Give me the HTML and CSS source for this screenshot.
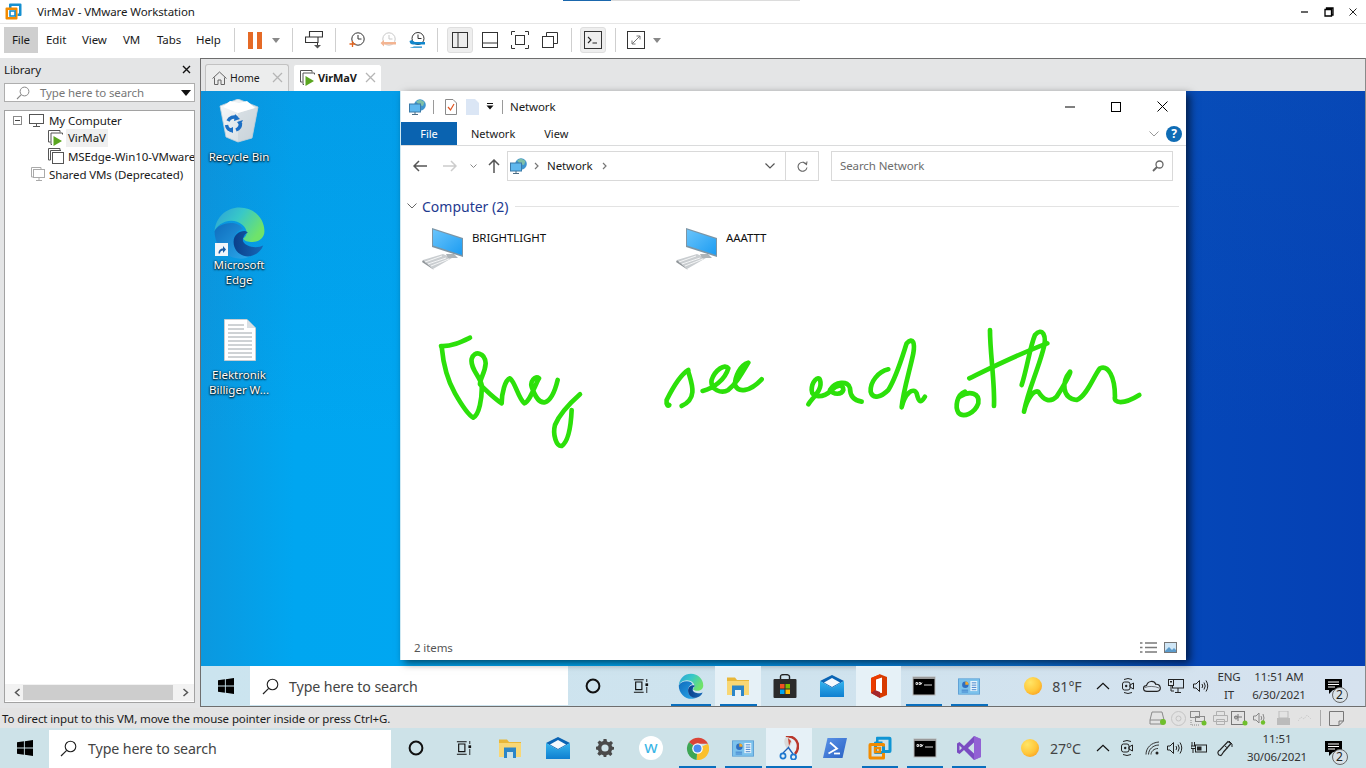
FILE: index.html
```html
<!DOCTYPE html>
<html lang="en">
<head>
<meta charset="utf-8">
<title>VirMaV - VMware Workstation</title>
<link rel="stylesheet" href="styles.css">
</head>
<body>
<svg class="defs" width="0" height="0" aria-hidden="true">
  <defs>
    <linearGradient id="gEdgeTop" x1="0" y1="0" x2="1" y2="0.5"><stop offset="0" stop-color="#2b9fd9"/><stop offset=".5" stop-color="#38c8c8"/><stop offset="1" stop-color="#6fe36a"/></linearGradient>
    <linearGradient id="gEdgeBody" x1="0" y1="0" x2="1" y2="1"><stop offset="0" stop-color="#0f6cbd"/><stop offset="1" stop-color="#2ba8ea"/></linearGradient>
    <linearGradient id="gEdgeDark" x1="0" y1="0" x2="1" y2="0"><stop offset="0" stop-color="#0b3f8a"/><stop offset="1" stop-color="#1668b8"/></linearGradient>
    <radialGradient id="gSun" cx=".35" cy=".3" r=".85"><stop offset="0" stop-color="#ffe566"/><stop offset=".6" stop-color="#ffc73a"/><stop offset="1" stop-color="#f99a1c"/></radialGradient>
    <linearGradient id="gScreen" x1="0" y1="0" x2="1" y2="1"><stop offset="0" stop-color="#69c4fb"/><stop offset="1" stop-color="#1c9cf2"/></linearGradient>
    <linearGradient id="gBin" x1="0" y1="0" x2="1" y2="1"><stop offset="0" stop-color="#f7fafb"/><stop offset="1" stop-color="#cfd9df"/></linearGradient>
    <linearGradient id="gMail" x1="0" y1="0" x2="0" y2="1"><stop offset="0" stop-color="#35b4ee"/><stop offset="1" stop-color="#0f7fd0"/></linearGradient>
    <linearGradient id="gPs" x1="0" y1="0" x2="1" y2="1"><stop offset="0" stop-color="#5b93e8"/><stop offset="1" stop-color="#2a62c4"/></linearGradient>

    <symbol id="i-win" viewBox="0 0 16 16"><path d="M0 2.3 6.9 1.3V7.6H0zM7.8 1.2 16 0V7.6H7.8zM0 8.4H6.9V14.7L0 13.7zM7.8 8.4H16V16L7.8 14.8z" fill="#000"/></symbol>
    <symbol id="i-search" viewBox="0 0 17 17"><circle cx="10.5" cy="6.5" r="5.3" fill="none" stroke="#222" stroke-width="1.1"/><path d="M6.7 10.3 1 16" stroke="#222" stroke-width="1.2"/></symbol>
    <symbol id="i-cortana" viewBox="0 0 16 16"><circle cx="8" cy="8" r="6.4" fill="none" stroke="#111" stroke-width="2"/></symbol>
    <symbol id="i-taskview" viewBox="0 0 18 16"><path d="M1 1H12M1 15H12M3 3.500H10V12H3z" fill="none" stroke="#111" stroke-width="1.3"/><rect x="14" y="5" width="3" height="3" fill="#111"/><path d="M15.500 0V3.500M15.500 9V16" stroke="#111" stroke-width="1"/></symbol>
    <symbol id="i-edge" viewBox="0 0 48 48">
      <path d="M3 23C4 11 13 3 24 3c12 0 21 9 21 20 0 6-5 9-10 9-4 0-7-1-8-3 2-1 3-3 3-5 0-5-6-10-13-10C10 14 4 19 3 23z" fill="url(#gEdgeTop)"/>
      <path d="M3 23c0 13 10 23 22 23 3 0 6-1 8-2-8 0-14-5-14-12 0-5 3-10 8-11-2-3-5-5-10-5-7 0-12 3-14 7z" fill="url(#gEdgeBody)"/>
      <path d="M19 32c0 7 6 13 14 12 5-1 9-4 11-9-2 1-6 2-10 1-5-1-8-4-7-7 1-3 2-4 4-5-2-3-12-1-12 8z" fill="url(#gEdgeDark)"/>
    </symbol>
    <symbol id="i-folder" viewBox="0 0 22 20"><path d="M0 1.500H8L10 4H22V6H0z" fill="#e8b739"/><path d="M0 5H22V19H15V14H7V19H0z" fill="#f8d775"/><path d="M5 9.500H17V20H14V14H8V20H5z" fill="#2c86c8"/></symbol>
    <symbol id="i-store" viewBox="0 0 24 24"><path d="M7.500 5V2.500C7.500 1 9 .5 12 .5S16.500 1 16.500 2.500V5" fill="none" stroke="#222" stroke-width="1.4"/><rect x="0.500" y="5" width="23" height="19" rx="1" fill="#2b2b2b"/><rect x="7" y="10" width="4.500" height="4.500" fill="#f25022"/><rect x="12.500" y="10" width="4.500" height="4.500" fill="#7fba00"/><rect x="7" y="15.500" width="4.500" height="4.500" fill="#00a4ef"/><rect x="12.500" y="15.500" width="4.500" height="4.500" fill="#ffb900"/></symbol>
    <symbol id="i-mail" viewBox="0 0 24 22"><path d="M0 6 12 0 24 6 12 13z" fill="#0a64b4"/><path d="M4 7.500 12 3 20 7.500 12 12z" fill="#f5f9fd"/><path d="M0 6 12 13 24 6V22H0z" fill="url(#gMail)"/></symbol>
    <symbol id="i-office" viewBox="0 0 18 24"><path d="M17 3 10 .3 1 4V19L10 24 17 21z" fill="#d83b01"/><path d="M6 5.500 12 3.500V19L4 18 6 16z" fill="#fff"/><path d="M1 4 10 .3V3.500L5 5.500V16L1 19z" fill="#eb3c00"/><path d="M1 19 5 16 10 18V24z" fill="#a4262c"/></symbol>
    <symbol id="i-cmd" viewBox="0 0 24 20"><rect x="1" y="1" width="22" height="18" fill="#000" stroke="#b8b8b8"/><rect x="1" y="1" width="22" height="2" fill="#999"/><path d="M4 6.500H5.500V8.500H4zM7 6.500H8.500V8.500H7zM10 6.500 9 8.500M12 9H20" stroke="#d5d5d5" stroke-width="1" fill="none"/></symbol>
    <symbol id="i-control" viewBox="0 0 24 18"><rect x="0.500" y="0.500" width="23" height="17" fill="#7cc2ec" stroke="#5c9fd4"/><circle cx="8" cy="7" r="3.500" fill="#2f6fc0"/><path d="M8 7V3.500A3.500 3.500 0 0 1 11.500 7z" fill="#f3a92c"/><path d="M4 13H11M4 15H11" stroke="#3b7bc8"/><rect x="13.500" y="3" width="7.500" height="11" fill="#e8f4fb"/><path d="M15 5H20M15 7.500H20M15 10H20M15 12.500H20" stroke="#3b7bc8"/></symbol>
    <symbol id="i-gear" viewBox="0 0 18 18"><path d="M7.500 0H10.500L11 2.500 13 3.300 15 1.900 17 4 15.500 6 16.300 7.800 18 8V10.500L16 11 15.200 13 16.400 15 14.400 17 12.400 15.600 10.500 16.300 10.300 18H7.700L7.300 16.200 5.500 15.500 3.400 16.800 1.300 14.800 2.700 12.800 2 11 0 10.500V7.700L2 7.300 2.800 5.300 1.500 3.400 3.500 1.400 5.500 2.700 7.300 2z" fill="#4a4a4a"/><circle cx="9" cy="9" r="3.600" fill="#cfe3e9"/></symbol>
    <symbol id="i-chrome" viewBox="0 0 24 24"><path d="M12 12 3 5.500A12 12 0 0 1 23 7H12z" fill="#db4437"/><path d="M12 12 23 7A12 12 0 0 1 11 24z" fill="#fbc02d"/><path d="M12 12 11 24A12 12 0 0 1 3 5.500z" fill="#3ea655"/><circle cx="12" cy="12" r="5.500" fill="#fff"/><circle cx="12" cy="12" r="4.200" fill="#4a8cf0"/></symbol>
    <symbol id="i-snip" viewBox="0 0 20 24"><path d="M7 1C13-1 19 4 19 10c0 3-1 6-3 8" fill="none" stroke="#b9382c" stroke-width="2.500"/><path d="M7 1C4 4 5 9 9 14l4-8C12 3 10 1 7 1z" fill="#d9d9d9"/><path d="M9 2 12 5 10 10z" fill="#c8432f"/><path d="M4 17 10 11M14 18 9 11" stroke="#1e60b8" stroke-width="1.300"/><circle cx="4" cy="20" r="2.600" fill="none" stroke="#1e78d0" stroke-width="1.700"/><circle cx="14.500" cy="21" r="2.600" fill="none" stroke="#1e78d0" stroke-width="1.700"/></symbol>
    <symbol id="i-ps" viewBox="0 0 24 20"><path d="M4.500 0H24L19.500 20H0z" fill="url(#gPs)"/><path d="M7 4.500 14 10.500 5.500 15.500" fill="none" stroke="#fff" stroke-width="1.800"/><path d="M11 15.500H17" stroke="#fff" stroke-width="1.800"/></symbol>
    <symbol id="i-vmware" viewBox="0 0 24 24"><path d="M9 0.800H21.500Q23.500.8 23.500 2.800V15Q23.500 17 21.500 17H16.500V14H20.500V3.800H10.500V7.500H8V1.800Q8 .8 9 .8z" fill="#0f95d4"/><path d="M8 5.500H14.500V8.500H9V12H6V6.500Q6 5.500 8 5.500zM9 13V15H14V8H17V16.500Q17 18 15.500 18H7.500Q6 18 6 16.500V13z" fill="#0f95d4"/><path d="M2.500 7H15.500Q17 7 17 8.500V10.500H14V10H3.500V20.500H14V17H17V22Q17 23.500 15.500 23.500H2.500Q.5 23.500.5 21.500V9Q.5 7 2.500 7z" fill="#f38b00"/><path d="M7 12H12V16H7z" fill="none" stroke="#f38b00" stroke-width="2.400"/></symbol>
    <symbol id="i-vs" viewBox="0 0 24 24"><path d="M17 0 24 3V21L17 24 7 14 2.500 18 0 16.500V7.500L2.500 6 7 10zM17 6.500 11 12 17 17.500zM2.500 9.500V14.500L5 12z" fill="#7a4cc2"/><path d="M17 0 24 3V21L17 24z" fill="#9d6bdc" fill-opacity=".7"/></symbol>
    <symbol id="i-sun" viewBox="0 0 18 18"><circle cx="9" cy="9" r="9" fill="url(#gSun)"/></symbol>
    <symbol id="i-chev" viewBox="0 0 14 8"><path d="M1 7 7 1.300 13 7" fill="none" stroke="#111" stroke-width="1.200"/></symbol>
    <symbol id="i-cam" viewBox="0 0 12 18"><path d="M2 2.500Q6 0.500 10 2.500M2 15.500Q6 17.500 10 15.500" fill="none" stroke="#222"/><rect x="0.500" y="5" width="7.500" height="8" rx="2" fill="none" stroke="#222"/><path d="M8 8 11.500 6V12L8 10z" fill="none" stroke="#222"/><circle cx="4.200" cy="9" r="1.200" fill="#222"/></symbol>
    <symbol id="i-cloud" viewBox="0 0 18 12"><path d="M4 11.300C-.5 11.300-.5 5.800 3.500 5.500 5 .5 11 .2 12.800 4.300 18 3.500 19 11.300 14 11.300z" fill="#dde7f0" stroke="#222" stroke-width="1.200"/><path d="M2 7.500C5 6 12 6 16 8" fill="none" stroke="#222" stroke-width=".6"/></symbol>
    <symbol id="i-netmon" viewBox="0 0 16 15"><rect x="4.500" y="0.500" width="11" height="8.500" fill="none" stroke="#222"/><rect x="0.500" y="0.500" width="5" height="6" fill="#dbe6ef" stroke="#222"/><path d="M3 6.500V12H6M10 9V13M7 13.500H13" fill="none" stroke="#222"/><rect x="2" y="2" width="2" height="1.500" fill="#222"/></symbol>
    <symbol id="i-speaker" viewBox="0 0 16 14"><path d="M.5 5H3L6.500 1.500V12.500L3 9H.5z" fill="none" stroke="#222"/><path d="M9 5Q10.500 7 9 9M11 3.500Q13.500 7 11 10.500M13 1.500Q16.500 7 13 12.500" fill="none" stroke="#222"/></symbol>
    <symbol id="i-wifi" viewBox="0 0 16 14"><path d="M1 13.500C1 7 6 1.500 14 1M3.500 13.500C3.500 8.500 8 4 14 4M6 13.500C6 10.500 9 7.500 13 7.500" fill="none" stroke="#333" stroke-width="1"/><circle cx="12" cy="12" r="1.500" fill="#222"/></symbol>
    <symbol id="i-battery" viewBox="0 0 16 12"><rect x="4.500" y="3" width="11" height="7" fill="none" stroke="#222"/><rect x="6" y="4.500" width="4.500" height="4" fill="#222"/><path d="M1 0V4M3.500 0V4M0 4H4.500V6.500H0zM2 6.500V11" stroke="#222" fill="none"/></symbol>
    <symbol id="i-pen" viewBox="0 0 16 17"><path d="M2 15C0 13 1 11 3 10L11 1.500 14 3.500 6.500 12C5 14 5 15 4 15.500z" fill="none" stroke="#222" stroke-width="1.200"/><path d="M8 6 10.500 8M12 1 15 4 15 7" fill="none" stroke="#222"/></symbol>
    <symbol id="i-note" viewBox="0 0 17 15"><path d="M0 0H17V11H8L4 15V11H0z" fill="#000"/><path d="M3 3H14M3 5.500H14M3 8H10" stroke="#fff" stroke-width="1"/></symbol>
    <symbol id="i-monitor" viewBox="0 0 45 44">
      <path d="M3 33 23 27 32 31 13 42z" fill="#c9cdd0"/><path d="M3 33 13 42 14 43 2 35z" fill="#8f9599"/>
      <path d="M5 35 22 29M8 37 26 31M11 39 29 32" stroke="#fff" stroke-width=".8"/>
      <path d="M26 27H34L38 31 28 31z" fill="#aeb4b8"/>
      <path d="M12 1 43 11V30L12 20z" fill="#7d95a5"/><path d="M13 2.500 42 12V28L13 18.500z" fill="url(#gScreen)"/>
    </symbol>
    <symbol id="i-net" viewBox="0 0 17 16">
      <circle cx="11" cy="6" r="5.800" fill="#3f95cf"/><path d="M7 2.500 11 .5 15.500 3 14 7 10 6z" fill="#7fbfa8"/>
      <rect x="0.500" y="5" width="11" height="8" fill="#5fb8ee" stroke="#3b7aa8"/><path d="M6 13V15.500M3 15.500H9" stroke="#4b6c84"/>
    </symbol>
  </defs>
</svg>

<div class="app">
  <header class="titlebar">
    <svg class="logo" width="17" height="17" viewBox="0 0 17 17"><path d="M5 .5H15.500Q16.500.5 16.500 1.500V12Q16.500 13 15.500 13H12.500V10.500H14V3H6.500V5H4V1.500Q4 .5 5 .5z" fill="#1590d0"/><path d="M1.500 4.500H11.500Q12.500 4.500 12.500 5.500V15.500Q12.500 16.500 11.500 16.500H1.500Q.5 16.500.5 15.500V5.500Q.5 4.500 1.500 4.500zM3 7V14H10V7z" fill="#f38b00"/><rect x="5" y="8" width="5" height="5" fill="none" stroke="#1590d0" stroke-width="1.600"/></svg>
    <span class="title-text">VirMaV - VMware Workstation</span>
    <span class="focus-mark"></span>
    <div class="win-ctrls">
      <svg width="10" height="10" viewBox="0 0 10 10"><path d="M1 5H8" stroke="#000" stroke-width="1.200"/></svg>
      <svg width="10" height="10" viewBox="0 0 10 10"><path d="M2.500 2.500V1H9V8H7.500M1 2.500H7.500V9H1z" fill="none" stroke="#000" stroke-width="1.300"/></svg>
      <svg width="10" height="10" viewBox="0 0 10 10"><path d="M1.500 1.500 8.500 8.500M8.500 1.500 1.500 8.500" stroke="#222"/></svg>
    </div>
  </header>

  <nav class="menubar">
    <div class="menus">
      <span class="menu is-open">File</span><span class="menu m-edit">Edit</span><span class="menu m-view">View</span><span class="menu m-vm">VM</span><span class="menu m-tabs">Tabs</span><span class="menu m-help">Help</span>
    </div>
    <div class="tools">
      <i class="sep"></i>
      <svg width="14" height="17" viewBox="0 0 14 17"><rect width="5" height="17" fill="#e56a26"/><rect x="9" width="5" height="17" fill="#e56a26"/></svg>
      <i class="caret"></i>
      <i class="sep"></i>
      <svg width="18" height="18" viewBox="0 0 18 18"><path d="M4.500 6V.5H17.500V6H13M.5 6H13V11.500H.5z" fill="none" stroke="#333" stroke-width="1.100"/><path d="M12.500 11.500V14" stroke="#333"/><path d="M12.500 17.500 9 14H16z" fill="#555"/></svg>
      <i class="sep"></i>
      <svg width="16" height="16" viewBox="0 0 16 16"><circle cx="9" cy="7" r="6.200" fill="none" stroke="#333" stroke-width="1"/><path d="M9 3V7H12.500" fill="none" stroke="#333"/><path d="M3.500 9V15M.5 12H6.500" stroke="#e2641e" stroke-width="1.300"/></svg>
      <svg width="17" height="16" viewBox="0 0 17 16"><circle cx="9" cy="7" r="6.200" fill="none" stroke="#c9c9c9"/><path d="M9 3V7H12.500" fill="none" stroke="#c9c9c9"/><path d="M.5 11 4 8V10H16V12.500H4V14.500z" fill="#f3b491"/></svg>
      <svg width="17" height="16" viewBox="0 0 17 16"><circle cx="9" cy="6.500" r="6" fill="none" stroke="#333"/><path d="M9 2.500V6.500H12.500" fill="none" stroke="#333"/><path d="M.5 9Q1 13 5 12.500H16V10H6Q4 9.500 3 8zM1 15Q3 15.500 5 14.500H13V15.800H2z" fill="#0f86cc"/></svg>
      <i class="sep"></i>
      <span class="toggle"><svg width="16" height="16" viewBox="0 0 16 16"><rect x="0.500" y="0.500" width="15" height="15" fill="none" stroke="#333"/><path d="M6 0V16" stroke="#333"/></svg></span>
      <svg width="16" height="16" viewBox="0 0 16 16"><rect x="0.500" y="0.500" width="15" height="15" fill="none" stroke="#333"/><path d="M0 11H16" stroke="#333"/></svg>
      <svg width="18" height="18" viewBox="0 0 18 18"><path d="M.5 4V.5H4M14 .5H17.500V4M17.500 14V17.500H14M4 17.500H.5V14" fill="none" stroke="#333"/><rect x="4.500" y="4.500" width="9" height="9" fill="none" stroke="#333"/></svg>
      <svg width="16" height="16" viewBox="0 0 16 16"><path d="M4.500 4.500V.5H15.500V11.500H11.500" fill="none" stroke="#333"/><rect x="0.500" y="4.500" width="11" height="11" fill="none" stroke="#333"/></svg>
      <i class="sep"></i>
      <span class="toggle t-console"><svg width="18" height="18" viewBox="0 0 18 18"><rect x="0.500" y="0.500" width="17" height="17" fill="none" stroke="#333"/><path d="M4 6 7 9 4 12" fill="none" stroke="#222" stroke-width="1.100"/><path d="M8.500 12H13" stroke="#222"/></svg></span>
      <i class="sep"></i>
      <svg width="18" height="18" viewBox="0 0 18 18"><rect x="0.500" y="0.500" width="17" height="17" fill="none" stroke="#333"/><path d="M5 13 13 5M9.500 5H13V8.500M8.500 13H5V9.500" fill="none" stroke="#777"/></svg>
      <i class="caret"></i>
    </div>
  </nav>

  <div class="workspace">
    <aside class="library">
      <div class="lib-head"><span>Library</span><svg width="9" height="9" viewBox="0 0 9 9"><path d="M1 1 8 8M8 1 1 8" stroke="#111" stroke-width="1.400"/></svg></div>
      <div class="lib-search">
        <svg width="14" height="14" viewBox="0 0 14 14"><circle cx="8.500" cy="5.500" r="4.400" fill="none" stroke="#888"/><path d="M5.300 8.700 1 13" stroke="#888" stroke-width="1.100"/></svg>
        <span>Type here to search</span>
        <i class="drop"></i>
      </div>
      <div class="tree">
        <div class="tree-rows">
          <div class="row">
            <svg class="expander" width="9" height="9" viewBox="0 0 9 9"><rect x="0.500" y="0.500" width="8" height="8" fill="#fff" stroke="#8a8a8a"/><path d="M2 4.500H7" stroke="#444"/></svg>
            <svg class="row-pc" width="15" height="13" viewBox="0 0 15 13"><rect x="0.500" y="0.500" width="14" height="9" fill="none" stroke="#555"/><path d="M7.500 10V12M4 12.500H11" stroke="#555"/></svg>
            <span>My Computer</span>
          </div>
          <div class="row indent">
            <svg width="16" height="16" viewBox="0 0 16 16"><path d="M2.500 12H.5V.5H12V2.500" fill="none" stroke="#555"/><path d="M4 14.500H3V3H14.500V4.500" fill="none" stroke="#555"/><path d="M5.500 6 14 11 5.500 16z" fill="#5aa620"/></svg>
            <span class="sel">VirMaV</span>
          </div>
          <div class="row indent">
            <svg width="16" height="16" viewBox="0 0 16 16"><path d="M2.500 12H.5V.5H12V2.500" fill="none" stroke="#555"/><rect x="4.500" y="4.500" width="11" height="11" fill="#fff" stroke="#555"/><path d="M2.500 12V2.500H13" fill="none" stroke="#555"/></svg>
            <span class="sel-none">MSEdge-Win10-VMware</span>
          </div>
          <div class="row shared">
            <svg width="14" height="15" viewBox="0 0 14 15"><path d="M2.500 10H.5V.5H10V2" fill="none" stroke="#aaa"/><rect x="2.500" y="2.500" width="11" height="8" fill="#fff" stroke="#aaa"/><path d="M8 11V13M5 13.500H11" stroke="#aaa"/></svg>
            <span>Shared VMs (Deprecated)</span>
          </div>
        </div>
        <div class="hscroll">
          <svg width="7" height="9" viewBox="0 0 7 9"><path d="M5.500 1 1.500 4.500 5.500 8" fill="none" stroke="#555" stroke-width="1.500"/></svg>
          <i class="thumb"></i>
          <svg class="arrow-r" width="7" height="9" viewBox="0 0 7 9"><path d="M1.500 1 5.500 4.500 1.500 8" fill="none" stroke="#555" stroke-width="1.500"/></svg>
        </div>
      </div>
    </aside>

    <main class="vm-panel">
      <div class="tabs">
        <div class="tab tab-home">
          <svg width="15" height="14" viewBox="0 0 15 14"><path d="M.5 7.500 7.500 1 14.500 7.500M2.500 6.500V13.500H6V9H9V13.500H12.500V6.500" fill="none" stroke="#666"/></svg>
          <span>Home</span>
          <svg class="tab-x" width="11" height="11" viewBox="0 0 11 11"><path d="M1 1 10 10M10 1 1 10" stroke="#b5b5b5" stroke-width="1.300"/></svg>
        </div>
        <div class="tab tab-vm">
          <svg width="16" height="16" viewBox="0 0 16 16"><path d="M2.500 12H.5V.5H12V2.500" fill="none" stroke="#555"/><path d="M4 14.500H3V3H14.500V4.500" fill="none" stroke="#555"/><path d="M5.500 6 14 11 5.500 16z" fill="#5aa620"/></svg>
          <span>VirMaV</span>
          <svg class="tab-x" width="11" height="11" viewBox="0 0 11 11"><path d="M1 1 10 10M10 1 1 10" stroke="#b5b5b5" stroke-width="1.300"/></svg>
        </div>
      </div>

      <div class="desktop">
        <div class="desk-icon di-bin">
          <div class="di-pic"><svg class="pic-bin" width="40" height="44" viewBox="0 0 40 44"><path d="M1 7 19 0 39 8 33 39 19 43 7 38z" fill="url(#gBin)" stroke="#c4d2da" stroke-width=".8"/><path d="M19 14 39 8 33 39 19 43z" fill="#b9c6ce" fill-opacity=".35"/><path d="M4 8 11 2 20 4 28 2 36 9 19 14z" fill="#fff"/><path d="M9 22A7 7 0 0 1 18 18.500M21.500 24A7 7 0 0 1 17 31M12.500 31.500A7 7 0 0 1 7.500 26" fill="none" stroke="#1b6fc4" stroke-width="3.400"/><path d="M16 15 21 20 15 22zM24 21 21 27 18 23zM8 31 14 28 14 34z" fill="#1b6fc4"/></svg></div>
          <span>Recycle Bin</span>
        </div>
        <div class="desk-icon di-edge">
          <div class="di-pic"><svg width="57" height="57" viewBox="0 0 48 48"><use href="#i-edge"/></svg><span class="shortcut"><svg width="13" height="13" viewBox="0 0 13 13"><rect width="13" height="13" fill="#f2f6fa"/><path d="M3.500 10.500C3.500 7 5.500 5.500 8 5.500V3L11 6.500 8 10V7.500C6.500 7.500 5 8.500 5 10.500z" fill="#1c5fa8"/></svg></span></div>
          <span>Microsoft<br>Edge</span>
        </div>
        <div class="desk-icon di-doc">
          <div class="di-pic"><svg class="pic-doc" width="32" height="42" viewBox="0 0 32 42"><path d="M.5.5H23L31.500 9V41.500H.5z" fill="#fff" stroke="#c8ced2"/><path d="M23 .5V9H31.500z" fill="#d9dfe3"/><path d="M4 6H20M4 10H20M4 14H28M4 18H28M4 22H28M4 26H28M4 30H28M4 34H28M4 38H28" stroke="#9ea5aa"/></svg></div>
          <span>Elektronik<br>Billiger W...</span>
        </div>

        <section class="explorer">
          <div class="ex-title">
            <svg width="17" height="16" viewBox="0 0 17 16"><use href="#i-net"/></svg>
            <i class="ex-sep"></i>
            <svg width="12" height="16" viewBox="0 0 12 16"><path d="M.5.5H8L11.500 4V15.500H.5z" fill="#fff" stroke="#8a8a8a"/><path d="M3 8 5.500 11 9 5" fill="none" stroke="#e0531f" stroke-width="1.200"/></svg>
            <svg class="ex-blank" width="13" height="16" viewBox="0 0 13 16"><path d="M0 0H9L13 4V16H0z" fill="#dbe6f5"/></svg>
            <svg class="ex-caret" width="8" height="7" viewBox="0 0 8 7"><path d="M1 .5H7" stroke="#111"/><path d="M.5 2.500H7.500L4 6.500z" fill="#111"/></svg>
            <i class="ex-sep"></i>
            <span class="ex-name">Network</span>
            <div class="ex-ctrls">
              <span><svg width="10" height="10" viewBox="0 0 10 10"><path d="M0 5H10" stroke="#000"/></svg></span>
              <span><svg width="10" height="10" viewBox="0 0 10 10"><rect x="0.500" y="0.500" width="9" height="9" fill="none" stroke="#000"/></svg></span>
              <span><svg width="11" height="11" viewBox="0 0 11 11"><path d="M.5.5 10.500 10.500M10.500.5.500 10.500" stroke="#000"/></svg></span>
            </div>
          </div>
          <div class="ribbon">
            <span class="rib-file">File</span>
            <span class="rib-tab rib-net">Network</span>
            <span class="rib-tab rib-view">View</span>
            <svg class="rib-chev" width="10" height="6" viewBox="0 0 10 6"><path d="M.5.5 5 5 9.500.5" fill="none" stroke="#999"/></svg>
            <span class="rib-help">?</span>
          </div>
          <div class="addr-row">
            <svg width="14" height="12" viewBox="0 0 14 12"><path d="M6 1 1 6 6 11M1 6H14" fill="none" stroke="#555" stroke-width="1.500"/></svg>
            <svg class="nav-f" width="14" height="12" viewBox="0 0 14 12"><path d="M8 1 13 6 8 11M13 6H0" fill="none" stroke="#ccc" stroke-width="1.500"/></svg>
            <svg class="nav-d" width="7" height="5" viewBox="0 0 7 5"><path d="M.5.5 3.500 3.500 6.500.5" fill="none" stroke="#888"/></svg>
            <svg class="nav-u" width="12" height="14" viewBox="0 0 12 14"><path d="M1 6 6 1 11 6M6 1V14" fill="none" stroke="#555" stroke-width="1.500"/></svg>
            <div class="addr">
              <svg width="17" height="16" viewBox="0 0 17 16"><use href="#i-net"/></svg>
              <svg class="crumb" width="5" height="8" viewBox="0 0 5 8"><path d="M1 1 4 4 1 7" fill="none" stroke="#777" stroke-width="1.200"/></svg>
              <span>Network</span>
              <svg class="crumb crumb-b" width="5" height="8" viewBox="0 0 5 8"><path d="M1 1 4 4 1 7" fill="none" stroke="#777" stroke-width="1.200"/></svg>
              <svg class="addr-drop" width="10" height="6" viewBox="0 0 10 6"><path d="M.5.5 5 5 9.500.5" fill="none" stroke="#555" stroke-width="1.200"/></svg>
            </div>
            <div class="refresh"><svg width="11" height="11" viewBox="0 0 11 11"><path d="M9.500 3.500A4.500 4.500 0 1 0 10 6.500M6 1 9.500 3.500 10 .5" fill="none" stroke="#666" stroke-width="1.100"/></svg></div>
            <div class="ex-search"><span>Search Network</span><svg width="12" height="12" viewBox="0 0 12 12"><circle cx="7.500" cy="4.500" r="3.500" fill="none" stroke="#666" stroke-width="1.300"/><path d="M5 7 1 11" stroke="#666" stroke-width="1.800"/></svg></div>
          </div>
          <div class="ex-body">
            <div class="group-head">
              <svg width="10" height="6" viewBox="0 0 10 6"><path d="M.5.5 5 5 9.500.5" fill="none" stroke="#666"/></svg>
              <span>Computer (2)</span>
              <i></i>
            </div>
            <div class="computers">
              <div class="computer"><svg width="45" height="44" viewBox="0 0 45 44"><use href="#i-monitor"/></svg><span>BRIGHTLIGHT</span></div>
              <div class="computer"><svg width="45" height="44" viewBox="0 0 45 44"><use href="#i-monitor"/></svg><span>AAATTT</span></div>
            </div>
          </div>
          <div class="ex-status">
            <span>2 items</span>
            <div class="ex-views">
              <svg width="17" height="11" viewBox="0 0 17 11"><path d="M0 1H2.500M0 5.500H2.500M0 10H2.500M5 1H17M5 5.500H17M5 10H17" stroke="#7a7a7a" stroke-width="1.500"/></svg>
              <svg width="13" height="11" viewBox="0 0 13 11"><rect x="0.500" y="0.500" width="12" height="10" fill="#cfe6f6" stroke="#777"/><path d="M1 9 5 5 8 8 10 6 12 8V10H1z" fill="#5c9bcb"/></svg>
            </div>
          </div>
          <svg class="ink" width="786" height="569" viewBox="400 91 786 569" fill="none" stroke="#2ce00a" stroke-width="14" stroke-linecap="round" stroke-linejoin="round">
            <g transform="translate(435 335) scale(.3333)">
              <path d="M105 8C80 20 50 35 18 33"/>
              <path d="M20 35C25 90 40 140 60 175C80 210 100 240 115 248C132 240 142 190 140 150C135 125 105 100 110 72C118 45 150 52 152 85C150 115 135 130 135 148C150 165 185 195 200 205C200 175 210 135 225 130C240 140 250 190 268 205C285 200 300 150 312 130C300 120 285 140 290 155C300 185 315 205 330 202C350 195 362 160 368 135"/>
              <path d="M435 178C410 200 375 235 360 270C352 300 365 335 380 333C400 320 408 270 410 225"/>
            </g>
            <g transform="translate(400 190) scale(.3333)">
              <path d="M865 540C840 555 815 600 800 630C798 645 805 650 808 645"/>
              <path d="M865 545C875 580 895 625 845 648"/>
              <path d="M908 603C940 595 975 570 985 535C975 520 945 540 935 570C930 600 965 612 985 600C1005 585 1020 560 1045 518C1020 525 1005 560 1005 585C1015 610 1050 605 1085 568"/>
            </g>
            <g transform="translate(800 310) scale(.3333)">
              <path d="M25 283C35 265 70 240 60 210C55 195 35 215 35 240C35 265 70 265 95 240C110 225 130 220 130 240C125 255 100 255 90 240C105 215 145 210 150 235C150 260 165 272 185 275"/>
              <path d="M265 178C235 185 210 215 212 245C218 270 245 260 265 240C290 200 310 130 320 100C340 80 345 100 340 130C330 180 310 240 305 292C315 250 340 230 350 250C355 270 360 285 375 260"/>
              <path d="M495 245C470 255 465 290 475 308C490 325 525 310 535 280C540 250 510 240 480 260"/>
              <path d="M570 60C570 130 585 220 582 288"/>
              <path d="M508 205C580 170 660 130 742 100"/>
              <path d="M665 225C680 180 690 110 705 75C725 50 745 75 728 125C710 190 685 240 672 305C680 270 700 240 715 245C730 270 750 280 770 260C790 230 815 185 810 185C785 215 785 265 830 270C860 260 880 200 900 175C925 165 945 200 945 260C940 280 970 285 1018 255"/>
            </g>
          </svg>
        </section>
      </div>

      <div class="vm-taskbar">
        <div class="tb-start"><svg width="16" height="16"><use href="#i-win"/></svg></div>
        <div class="tb-search"><svg width="17" height="17"><use href="#i-search"/></svg><span>Type here to search</span></div>
        <div class="tb-apps">
          <span class="app-cell"><svg width="16" height="16"><use href="#i-cortana"/></svg></span>
          <span class="app-cell"><svg width="16" height="16" viewBox="0 0 18 16"><use href="#i-taskview" width="18" height="16"/></svg></span>
          <span class="app-cell on"><svg width="28" height="28" viewBox="0 0 48 48"><use href="#i-edge"/></svg></span>
          <span class="app-cell on hi"><svg width="22" height="20"><use href="#i-folder"/></svg></span>
          <span class="app-cell"><svg width="24" height="24"><use href="#i-store"/></svg></span>
          <span class="app-cell"><svg width="24" height="22"><use href="#i-mail"/></svg></span>
          <span class="app-cell hi"><svg width="18" height="24"><use href="#i-office"/></svg></span>
          <span class="app-cell on"><svg width="24" height="20"><use href="#i-cmd"/></svg></span>
          <span class="app-cell on"><svg width="22" height="17" viewBox="0 0 24 18"><use href="#i-control" width="24" height="18"/></svg></span>
        </div>
        <div class="tray tray-vm">
          <svg width="18" height="18"><use href="#i-sun"/></svg>
          <span class="temp">81°F</span>
          <svg width="14" height="8"><use href="#i-chev"/></svg>
          <svg width="12" height="18"><use href="#i-cam"/></svg>
          <svg width="18" height="12"><use href="#i-cloud"/></svg>
          <svg width="16" height="15"><use href="#i-netmon"/></svg>
          <svg width="16" height="14"><use href="#i-speaker"/></svg>
          <span class="lang">ENG<br>IT</span>
          <span class="clock">11:51 AM<br>6/30/2021</span>
          <span class="notif"><svg width="17" height="15"><use href="#i-note"/></svg><b>2</b></span>
        </div>
      </div>
    </main>
  </div>

  <div class="statusbar">
    <span>To direct input to this VM, move the mouse pointer inside or press Ctrl+G.</span>
    <div class="status-icons">
      <svg width="18" height="14" viewBox="0 0 18 14"><path d="M1 9 3 1H13L15 9V13H1zM1 9H15" fill="none" stroke="#8a8a8a"/><circle cx="14" cy="11" r="3" fill="#6fbf2c"/></svg>
      <svg width="15" height="15" viewBox="0 0 15 15"><circle cx="7.500" cy="7.500" r="7" fill="none" stroke="#c4c4c4"/><circle cx="7.500" cy="7.500" r="2.500" fill="none" stroke="#c4c4c4"/></svg>
      <svg width="18" height="15" viewBox="0 0 18 15"><rect x="0.500" y="0.500" width="9" height="6" fill="none" stroke="#8a8a8a"/><rect x="5.500" y="5.500" width="9" height="5" fill="none" stroke="#8a8a8a"/><path d="M1 9V14H9" fill="none" stroke="#8a8a8a" stroke-dasharray="1 1"/><circle cx="14" cy="12" r="2.500" fill="#6fbf2c"/></svg>
      <svg width="15" height="14" viewBox="0 0 15 14"><path d="M3.500 4V.5H11.500V4M.5 4.500H14.500V10.500H.5zM3.500 8.500H11.500V13.500H3.500z" fill="none" stroke="#b0b0b0"/></svg>
      <svg width="18" height="15" viewBox="0 0 18 15"><rect x="0.500" y="0.500" width="13" height="13" fill="none" stroke="#777"/><path d="M3 6H11M7 3V10" stroke="#777"/><circle cx="5" cy="6.500" r="1.500" fill="none" stroke="#777"/><circle cx="14" cy="12" r="2.500" fill="#6fbf2c"/></svg>
      <svg width="14" height="14" viewBox="0 0 14 14"><path d="M.5 5H3L6 2V12L3 9H.5zM8 5Q9.500 7 8 9M10 3Q12 7 10 11" fill="none" stroke="#888"/><circle cx="10" cy="11.500" r="2.200" fill="#6fbf2c"/></svg>
      <svg width="15" height="14" viewBox="0 0 15 14"><path d="M3 0H12V7H3z" fill="none" stroke="#bbb"/><path d="M1 7H14V14H1z" fill="#bbb"/></svg>
      <svg width="13" height="8" viewBox="0 0 13 8"><path d="M0 7 3 3 6 5 9 1 13 5" fill="none" stroke="#ccc" stroke-dasharray="1.500 1"/></svg>
      <i class="status-sep"></i>
      <svg width="15" height="15" viewBox="0 0 15 15"><path d="M.5.5H14.500V10L10 14.500H.5zM14.500 10H10V14.500" fill="none" stroke="#777"/></svg>
    </div>
  </div>

  <footer class="host-taskbar">
    <div class="hb-start"><svg width="16" height="16"><use href="#i-win"/></svg></div>
    <div class="hb-search"><svg width="17" height="17"><use href="#i-search"/></svg><span>Type here to search</span></div>
    <div class="hb-apps">
      <span class="app-cell"><svg width="16" height="16"><use href="#i-cortana"/></svg></span>
      <span class="app-cell"><svg width="16" height="16" viewBox="0 0 18 16"><use href="#i-taskview" width="18" height="16"/></svg></span>
      <span class="app-cell"><svg width="22" height="20"><use href="#i-folder"/></svg></span>
      <span class="app-cell"><svg width="24" height="22"><use href="#i-mail"/></svg></span>
      <span class="app-cell"><svg width="18" height="18"><use href="#i-gear"/></svg></span>
      <span class="app-cell"><span class="w-badge">w</span></span>
      <span class="app-cell on"><svg width="23" height="23" viewBox="0 0 24 24"><use href="#i-chrome"/></svg></span>
      <span class="app-cell on"><svg width="22" height="17" viewBox="0 0 24 18"><use href="#i-control" width="24" height="18"/></svg></span>
      <span class="app-cell on hi full"><svg width="20" height="24"><use href="#i-snip"/></svg></span>
      <span class="app-cell"><svg width="24" height="20"><use href="#i-ps"/></svg></span>
      <span class="app-cell on"><svg width="24" height="24"><use href="#i-vmware"/></svg></span>
      <span class="app-cell on"><svg width="24" height="20"><use href="#i-cmd"/></svg></span>
      <span class="app-cell on"><svg width="24" height="24"><use href="#i-vs"/></svg></span>
    </div>
    <div class="tray tray-host">
      <svg width="18" height="18"><use href="#i-sun"/></svg>
      <span class="temp">27°C</span>
      <svg width="14" height="8"><use href="#i-chev"/></svg>
      <svg width="12" height="18"><use href="#i-cam"/></svg>
      <svg width="16" height="14"><use href="#i-wifi"/></svg>
      <svg width="16" height="14"><use href="#i-speaker"/></svg>
      <svg width="16" height="12"><use href="#i-battery"/></svg>
      <svg width="16" height="17"><use href="#i-pen"/></svg>
      <span class="clock">11:51<br>30/06/2021</span>
      <span class="notif"><svg width="17" height="15"><use href="#i-note"/></svg><b>2</b></span>
    </div>
  </footer>
</div>
</body>
</html>
```

FILE: styles.css
```css
* { box-sizing: border-box; }
html, body { margin: 0; height: 100%; overflow: hidden; }
body { font-family: "Noto Sans", "Open Sans", sans-serif; font-size: 11.5px; letter-spacing: -.1px; color: #1a1a1a; background: #fff; }
svg { display: block; flex: none; }
i { font-style: normal; display: block; }
.defs { position: absolute; }
.app { width: 1366px; height: 768px; display: flex; flex-direction: column; }

.titlebar { height: 24px; display: flex; align-items: center; padding-left: 5px; border-bottom: 1px solid #e6e6e6; position: relative; }
.title-text { margin-left: 15px; }
.focus-mark { position: absolute; left: 563px; top: 0; width: 237px; height: 1px; background: linear-gradient(90deg, #1a67ad 48px, #dcdcdc 48px); }
.win-ctrls { margin-left: auto; width: 58px; margin-right: 8px; display: flex; justify-content: space-between; }

.menubar { height: 34px; display: flex; align-items: center; background: #fff; padding-bottom: 2px; }
.menus { width: 228px; height: 26px; padding-left: 4px; display: flex; align-items: center; }
.menu { line-height: 26px; }
.is-open { width: 34px; background: #cfcfcf; text-align: center; }
.m-edit { margin-left: 8px; width: 36px; }
.m-view { width: 41px; }
.m-vm { width: 34px; }
.m-tabs { width: 39px; }
.tools { height: 32px; display: grid; align-items: center; justify-items: center;
  grid-template-columns: 12px 30px 12px 20px 24px 18px 26px 36px 22px 19px 25px 36px 24px 36px 7px 31px 18px 24px 18px; }
.sep { width: 1px; height: 24px; background: #cfcfcf; }
.caret { width: 0; height: 0; border: 4px solid transparent; border-top: 5px solid #888; border-bottom: 0; }
.toggle { width: 26px; height: 26px; background: #eeeeee; border: 1px solid #dedede; border-radius: 3px; display: flex; align-items: center; justify-content: center; }
.t-console { justify-self: end; }

.workspace { flex: 1; display: flex; background: #e4e5e6; min-height: 0; }
.library { width: 200px; display: flex; flex-direction: column; padding: 0 5px 5px 4px; }
.lib-head { height: 25px; display: flex; align-items: center; justify-content: space-between; padding-bottom: 2px; }
.lib-head svg { margin-right: 4px; }
.lib-search { height: 19px; background: #fff; border: 1px solid #aeaeae; display: flex; align-items: center; padding-left: 11px; color: #777; }
.lib-search span { margin-left: 10px; }
.drop { margin-left: auto; margin-right: 3px; width: 0; height: 0; border: 5px solid transparent; border-top: 6px solid #111; border-bottom: 0; }
.tree { margin-top: 8px; flex: 1; background: #fff; border: 1px solid #a2a2a2; display: flex; flex-direction: column; min-height: 0; overflow: hidden; }
.tree-rows { flex: 1; }
.row { height: 18px; display: flex; align-items: center; white-space: nowrap; padding-left: 8px; }
.row-pc { margin-left: 7px; }
.row > svg + span { margin-left: 5px; }
.indent { padding-left: 43px; }
.indent > svg + span { margin-left: 2px; }
.sel { background: #efefef; padding: 0 2px; line-height: 18px; width: 42px; }
.sel-none { padding: 0 2px; }
.shared { padding-left: 26px; }
.shared > svg + span { margin-left: 4px; }
.hscroll { height: 17px; margin-bottom: 1px; display: flex; align-items: center; background: #f2f2f2; padding: 0 5px 0 9px; }
.thumb { width: 150px; height: 15px; background: #cdcdcd; margin-left: 2px; }
.arrow-r { margin-left: auto; }

.vm-panel { flex: 1; display: flex; flex-direction: column; border: 1px solid #6e6e6e; border-right-color: #8a8a8a; margin-bottom: 1px; min-width: 0; }
.tabs { height: 32px; padding: 5px 0 0 4px; display: flex; gap: 4px; align-items: flex-end; background: #e4e5e6; }
.tab { height: 27px; border: 1px solid #c2c2c2; border-bottom: 0; border-radius: 3px 3px 0 0; display: flex; align-items: center; padding: 0 0 1px 6px; font-size: 11px; }
.tab span { margin-left: 3px; }
.tab-home { width: 84px; background: #eceded; font-size: 10.500px; }
.tab-vm { width: 89px; background: #fff; border-color: #e4e5e6; font-weight: 700; }
.tab-vm span { margin-left: 2px; }
.tab-x { margin-left: auto; margin-right: 5px; }

.desktop { flex: 1; position: relative; background: linear-gradient(180deg, rgba(20,110,190,.16), rgba(20,110,190,0) 60%), linear-gradient(90deg, #0b98df 0, #00a6f0 8%, #00a8f3 35%, #0b72d4 70%, #0547b8 84%, #0540b4 100%); min-height: 0; }
.desk-icon { position: absolute; left: 0; width: 76px; display: flex; flex-direction: column; align-items: center; color: #fff; font-size: 11.500px; letter-spacing: 0; line-height: 15px; text-align: center; text-shadow: 0 1px 2px #000, 0 0 2px #000; }
.di-bin { top: 8px; }
.di-edge { top: 116px; }
.di-doc { top: 226px; }
.di-pic { height: 50px; width: 60px; display: flex; justify-content: center; align-items: center; position: relative; }
.pic-bin { margin-bottom: 6px; }
.pic-doc { margin-bottom: 4px; margin-left: 2px; }
.shortcut { position: absolute; left: 6px; bottom: 1px; }

.explorer { position: absolute; left: 199px; top: 0; width: 786px; height: 569px; background: #fff; border-left: 1px solid #cfe9f3; display: flex; flex-direction: column; box-shadow: 4px 3px 8px rgba(0,0,0,.6); color: #1a1a1a; }
.ex-title { height: 31px; display: flex; align-items: center; padding-left: 8px; }
.ex-sep { width: 1px; height: 14px; background: #9a9a9a; margin-left: 7px; }
.ex-title svg + .ex-sep + svg { margin-left: 11px; }
.ex-blank { margin-left: 9px; }
.ex-caret { margin-left: 7px; }
.ex-caret + .ex-sep { margin-left: 8px; }
.ex-name { margin-left: 7px; }
.ex-ctrls { margin-left: auto; display: flex; padding-right: 1px; }
.ex-ctrls span { width: 46px; height: 31px; display: flex; align-items: center; justify-content: center; }
.ribbon { height: 24px; display: flex; align-items: stretch; border-bottom: 1px solid #dadbdc; position: relative; font-size: 11px; letter-spacing: 0; }
.rib-file { width: 56px; background: #0a63b0; color: #fff; display: flex; align-items: center; justify-content: center; }
.rib-tab { display: flex; align-items: center; }
.rib-net { margin-left: 14px; }
.rib-view { margin-left: 29px; }
.rib-chev { margin-left: auto; align-self: center; margin-right: 7px; }
.rib-help { width: 16px; height: 16px; border-radius: 50%; background: #0f6cb5; color: #fff; font-weight: 700; font-size: 12px; line-height: 16px; text-align: center; align-self: center; margin-right: 4px; }
.addr-row { height: 41px; display: flex; align-items: center; padding: 0 13px 1px 12px; }
.nav-f { margin-left: 16px; }
.nav-d { margin-left: 13px; }
.nav-u { margin-left: 11px; }
.addr { margin-left: 7px; width: 279px; height: 30px; border: 1px solid #d9d9d9; display: flex; align-items: center; padding-left: 2px; }
.crumb { margin-left: 7px; }
.addr span { margin-left: 8px; padding-bottom: 2px; }
.crumb-b { margin-left: 9px; }
.addr-drop { margin-left: auto; margin-right: 10px; }
.refresh { width: 33px; height: 30px; border: 1px solid #d9d9d9; border-left: 0; display: flex; align-items: center; justify-content: center; }
.ex-search { margin-left: 12px; flex: 1; height: 30px; border: 1px solid #d9d9d9; display: flex; align-items: center; justify-content: space-between; padding: 0 8px; color: #6d6d6d; }
.ex-search span { padding-bottom: 2px; }
.ex-body { flex: 1; padding: 11px 7px 0 6px; }
.group-head { display: flex; align-items: center; height: 16px; color: #1e3a8f; font-size: 14px; letter-spacing: 0; }
.group-head span { margin-left: 5px; }
.group-head i { flex: 1; height: 1px; background: #e3e3e3; margin-left: 7px; }
.computers { margin-top: 13px; padding-left: 13px; display: grid; grid-template-columns: 254px 254px; }
.computer { display: flex; gap: 7px; color: #111; }
.computer span { line-height: 16px; margin-top: 3px; }
.ex-status { height: 26px; display: flex; align-items: center; justify-content: space-between; padding: 0 9px 0 13px; color: #555; }
.ex-views { display: flex; gap: 7px; }
.ink { position: absolute; left: -1px; top: 0; pointer-events: none; }

.vm-taskbar { height: 40px; display: flex; background: linear-gradient(90deg, #cbe4ef, #cfe3ee 50%, #d6e2ef); flex: none; }
.tb-start { width: 49px; display: flex; align-items: center; justify-content: center; }
.tb-search, .hb-search { background: #fff; display: flex; align-items: center; font-size: 14.200px; color: #444; white-space: nowrap; }
.tb-search { width: 318px; padding: 1px 0 0 12px; height: 39px; }
.tb-search span { margin-left: 10px; }
.hb-search span { margin-left: 11px; }
.tb-apps, .hb-apps { display: grid; height: 100%; }
.tb-apps { margin-left: 2px; grid-template-columns: 46px 50px 49px 46px 47px 48px 45px 45px 46px; }
.app-cell { position: relative; display: flex; align-items: center; justify-content: center; }
.app-cell.on::after { content: ""; position: absolute; left: 5px; right: 4px; bottom: 0; height: 2px; background: #0a6fbe; }
.app-cell.hi { background: #e6f1f7; }
.app-cell.full::after { left: 0; right: 0; }
.tray { display: grid; align-items: center; justify-items: center; height: 100%; }
.tray-vm { padding-left: 26px; grid-template-columns: 30px 38px 34px 16px 32px 16px 34px 22px 78px 30px; }
.tray-host { padding-left: 25px; grid-template-columns: 30px 41px 34px 14px 38px 6px 42px 10px 94px 18px; }
.temp { font-size: 14.200px; color: #444; white-space: nowrap; }
.lang, .clock { text-align: center; line-height: 18px; white-space: nowrap; color: #333; }
.notif { position: relative; display: block; width: 17px; height: 15px; margin-right: 0; }
.notif b { position: absolute; left: 7px; top: 8px; width: 16px; height: 16px; border-radius: 50%; border: 1px solid #666; background: #d9e2e8; font-weight: 400; font-size: 12px; line-height: 14px; text-align: center; color: #222; }

.statusbar { height: 20px; flex: none; background: #e3e3e3; display: flex; align-items: center; padding-left: 2px; }
.status-icons { margin-left: auto; display: grid; grid-template-columns: 21px 21px 19px 25px 13px 27px 21px 21px 11px 21px; align-items: center; justify-items: center; margin-right: 19px; }
.status-sep { width: 1px; height: 16px; background: #aaa; }

.host-taskbar { height: 40px; flex: none; display: flex; background: #cde2e8; }
.hb-start { width: 49px; display: flex; align-items: center; justify-content: center; }
.hb-search { width: 342px; padding: 0 0 2px 11px; margin-top: 2px; }
.hb-apps { grid-template-columns: 50px 45px 48px 48px 46px 46px 46px 46px 46px 45px 45px 45px 43px; }
.w-badge { width: 24px; height: 24px; border-radius: 50%; background: #fff; color: #3ab6e6; font-size: 17px; line-height: 22px; text-align: center; }
```
